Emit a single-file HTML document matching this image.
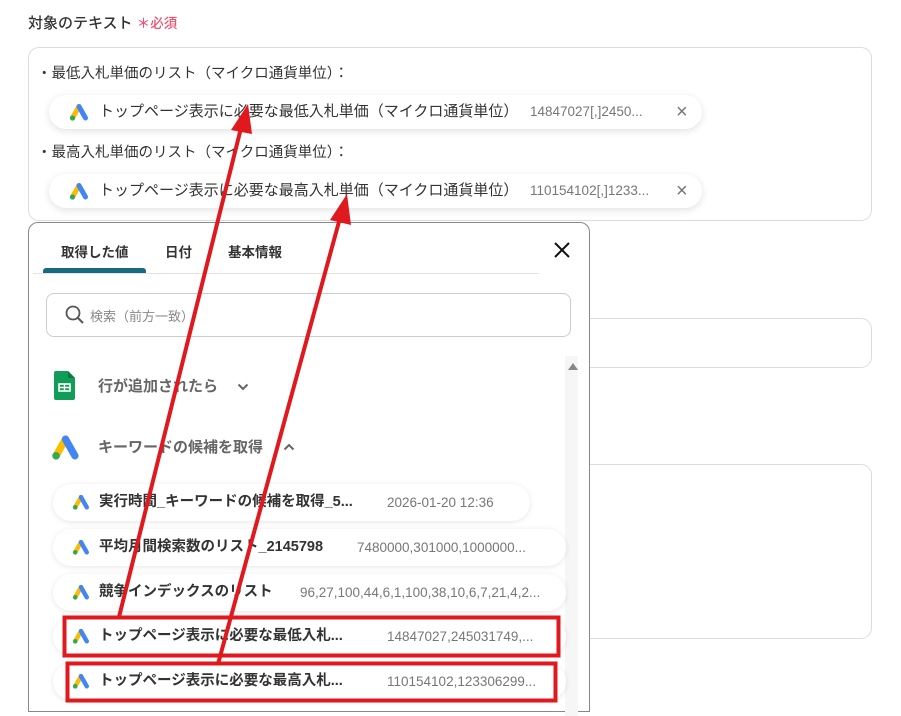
<!DOCTYPE html>
<html><head><meta charset="utf-8"><style>
*{box-sizing:border-box;margin:0;padding:0}
body{width:901px;height:703px;background:#fff;position:relative;overflow:hidden;font-family:"Liberation Sans","Noto Sans CJK JP",sans-serif;color:#333}
.a{position:absolute;white-space:nowrap}
.box{position:absolute;border:1px solid #dcdcdc;border-radius:11px;background:#fff}
.chip{position:absolute;height:34px;border-radius:17px;background:#fff;box-shadow:0 2px 8px rgba(0,0,0,.12);font-size:15px;line-height:34px}
.item{position:absolute;height:37px;border-radius:19px;background:#fff;box-shadow:0 1px 6px rgba(0,0,0,.10);font-size:14.5px;line-height:37px;font-weight:bold;color:#333}
.gv{color:#777;font-weight:normal;font-size:13.5px}
</style></head><body>
<svg width="0" height="0" style="position:absolute"><defs>
<g id="ads"><path d="M3.5 15 L10 3.5" stroke="#fbbc04" stroke-width="5" stroke-linecap="round"/><path d="M10 3.5 L16.5 15" stroke="#4285f4" stroke-width="5" stroke-linecap="round"/><circle cx="3.5" cy="15" r="2.6" fill="#34a853"/></g>
</defs></svg>

<div class="a" style="left:28px;top:12px;font-size:15px;color:#333;font-weight:500">対象のテキスト <span style="color:#f0506e;font-size:13.5px">＊必須</span></div>

<div class="box" style="left:28px;top:47px;width:844px;height:174px"></div>
<div class="a" style="left:37px;top:62px;font-size:14.5px">・最低入札単価のリスト（マイクロ通貨単位）：</div>
<div class="chip" style="left:49px;top:95px;width:653px">
<svg class="a" style="left:20px;top:8px" width="20" height="18" viewBox="0 0 20 18"><use href="#ads"/></svg>
<span class="a" style="left:50px">トップページ表示に必要な最低入札単価（マイクロ通貨単位）</span>
<span class="a gv" style="left:481px">14847027[,]2450...</span>
<span class="a" style="left:627px;color:#777;font-size:20px">×</span></div>
<div class="a" style="left:37px;top:141px;font-size:14.5px">・最高入札単価のリスト（マイクロ通貨単位）：</div>
<div class="chip" style="left:49px;top:174px;width:653px">
<svg class="a" style="left:20px;top:8px" width="20" height="18" viewBox="0 0 20 18"><use href="#ads"/></svg>
<span class="a" style="left:50px">トップページ表示に必要な最高入札単価（マイクロ通貨単位）</span>
<span class="a gv" style="left:481px">110154102[,]1233...</span>
<span class="a" style="left:627px;color:#777;font-size:20px">×</span></div>

<div class="box" style="left:500px;top:318px;width:372px;height:50px"></div>
<div class="box" style="left:500px;top:464px;width:372px;height:175px"></div>

<div class="a" style="left:28px;top:222px;width:562px;height:490px;border:1px solid #888;border-radius:10px 10px 0 0;background:#fff">
<div class="a" style="left:32px;top:18px;font-size:13.5px;font-weight:bold">取得した値</div>
<div class="a" style="left:136px;top:18px;font-size:13.5px;font-weight:bold">日付</div>
<div class="a" style="left:199px;top:18px;font-size:13.5px;font-weight:bold">基本情報</div>
<div class="a" style="left:14px;top:45px;width:103px;height:5px;background:#176b81;border-radius:3px 3px 0 0"></div>
<div class="a" style="left:4px;top:50px;width:506px;height:1px;background:#e3e3e3"></div>
<svg class="a" style="left:524px;top:18px" width="18" height="18" viewBox="0 0 18 18"><path d="M2 2L16 16M16 2L2 16" stroke="#111" stroke-width="2"/></svg>
<div class="a" style="left:17px;top:70px;width:525px;height:44px;border:1px solid #ccc;border-radius:8px">
<svg class="a" style="left:18px;top:11px" width="20" height="20" viewBox="0 0 20 20"><circle cx="8" cy="8" r="6.5" stroke="#555" stroke-width="1.8" fill="none"/><path d="M13 13L18 18" stroke="#555" stroke-width="2"/></svg>
<span class="a" style="left:43px;top:12px;font-size:13px;color:#888">検索（前方一致）</span></div>
<div class="a" style="left:536px;top:133px;width:13px;height:360px;background:#f6f6f6"></div>
<div class="a" style="left:539px;top:140px;width:0;height:0;border-left:5px solid transparent;border-right:5px solid transparent;border-bottom:7px solid #888"></div>
<svg class="a" style="left:25px;top:148px" width="21" height="29" viewBox="0 0 21 29"><path d="M2 0H14L21 7V27a2 2 0 0 1-2 2H2a2 2 0 0 1-2-2V2a2 2 0 0 1 2-2z" fill="#0f9d58"/><path d="M14 0V7H21z" fill="#0a7a43"/><rect x="5" y="13" width="11" height="7" fill="none" stroke="#fff" stroke-width="1.6"/><path d="M10.5 13V20M5 16.5H16" stroke="#fff" stroke-width="1.4"/></svg>
<div class="a" style="left:69px;top:152px;font-size:15px;color:#666;font-weight:bold">行が追加されたら</div>
<svg class="a" style="left:208px;top:160px" width="12" height="8" viewBox="0 0 12 8"><path d="M1.5 1.5L6 6L10.5 1.5" stroke="#666" stroke-width="2" fill="none"/></svg>
<svg class="a" style="left:22px;top:211px" width="29" height="27" viewBox="0 0 20 18.5"><use href="#ads"/></svg>
<div class="a" style="left:69px;top:213px;font-size:15px;color:#666;font-weight:bold">キーワードの候補を取得</div>
<svg class="a" style="left:254px;top:220px" width="12" height="8" viewBox="0 0 12 8"><path d="M1.5 6.5L6 2L10.5 6.5" stroke="#666" stroke-width="2" fill="none"/></svg>
</div>

<div class="item" style="left:53px;top:484px;width:477px"><svg class="a" style="left:19px;top:10px" width="18" height="16" viewBox="0 0 20 18"><use href="#ads"/></svg><span class="a" style="left:46px">実行時間_キーワードの候補を取得_5...</span><span class="a gv" style="left:334px">2026-01-20 12:36</span></div>
<div class="item" style="left:53px;top:529px;width:513px"><svg class="a" style="left:19px;top:10px" width="18" height="16" viewBox="0 0 20 18"><use href="#ads"/></svg><span class="a" style="left:46px">平均月間検索数のリスト_2145798</span><span class="a gv" style="left:304px">7480000,301000,1000000...</span></div>
<div class="item" style="left:53px;top:574px;width:513px"><svg class="a" style="left:19px;top:10px" width="18" height="16" viewBox="0 0 20 18"><use href="#ads"/></svg><span class="a" style="left:46px">競争インデックスのリスト</span><span class="a gv" style="left:247px">96,27,100,44,6,1,100,38,10,6,7,21,4,2...</span></div>
<div class="item" style="left:53px;top:618px;width:513px"><svg class="a" style="left:19px;top:10px" width="18" height="16" viewBox="0 0 20 18"><use href="#ads"/></svg><span class="a" style="left:46px">トップページ表示に必要な最低入札...</span><span class="a gv" style="left:334px">14847027,245031749,...</span></div>
<div class="item" style="left:53px;top:663px;width:513px"><svg class="a" style="left:19px;top:10px" width="18" height="16" viewBox="0 0 20 18"><use href="#ads"/></svg><span class="a" style="left:46px">トップページ表示に必要な最高入札...</span><span class="a gv" style="left:334px">110154102,123306299...</span></div>

<svg class="a" style="left:0;top:0" width="901" height="703" viewBox="0 0 901 703">
<rect x="64.5" y="617.5" width="494" height="38" fill="none" stroke="#e0191e" stroke-width="4"/>
<rect x="67.5" y="663.5" width="488" height="37" fill="none" stroke="#e0191e" stroke-width="4"/>
<path d="M119 617L241 128" stroke="#e0191e" stroke-width="4"/>
<path d="M248 104L231 130L252 134z" fill="#e0191e"/>
<path d="M218 664L340 218" stroke="#e0191e" stroke-width="4"/>
<path d="M347 194L330 220L351 225z" fill="#e0191e"/>
</svg>
</body></html>
